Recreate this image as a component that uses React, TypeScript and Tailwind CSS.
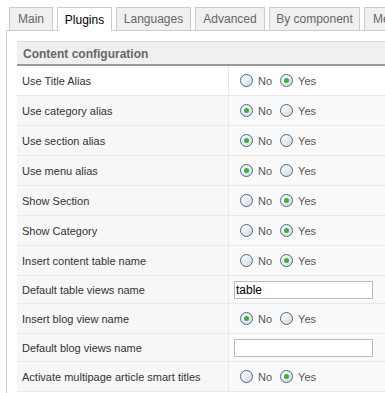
import React from "react";

type Row =
  | { label: string; kind: "radio"; yes: boolean }
  | { label: string; kind: "text"; value: string };

const rows: Row[] = [
  { label: "Use Title Alias", kind: "radio", yes: true },
  { label: "Use category alias", kind: "radio", yes: false },
  { label: "Use section alias", kind: "radio", yes: false },
  { label: "Use menu alias", kind: "radio", yes: false },
  { label: "Show Section", kind: "radio", yes: true },
  { label: "Show Category", kind: "radio", yes: true },
  { label: "Insert content table name", kind: "radio", yes: true },
  { label: "Default table views name", kind: "text", value: "table" },
  { label: "Insert blog view name", kind: "radio", yes: false },
  { label: "Default blog views name", kind: "text", value: "" },
  { label: "Activate multipage article smart titles", kind: "radio", yes: true },
];

const tabs = [
  { name: "Main", w: "w-[44px] justify-center" },
  { name: "Plugins", w: "w-[55px] justify-center" },
  { name: "Languages", w: "w-[75px] justify-center" },
  { name: "Advanced", w: "w-[70px] justify-center" },
  { name: "By component", w: "w-[91px] justify-center" },
  { name: "Menus", w: "w-[60px] justify-start pl-[8px]" },
];

function Radio({ checked }: { checked: boolean }) {
  return (
    <span className="relative inline-block w-[13px] h-[13px] rounded-full border border-[#3f6a94] bg-gradient-to-br from-white to-[#d4d8dc]">
      {checked && (
        <span className="absolute left-[3px] top-[3px] w-[5px] h-[5px] rounded-full bg-[#36b336]" />
      )}
    </span>
  );
}

function RadioPair({ yes }: { yes: boolean }) {
  return (
    <div className="flex items-center pl-[11px] text-[#555]">
      <Radio checked={!yes} />
      <span className="ml-[5px] mr-[8px] pt-[2px]">No</span>
      <Radio checked={yes} />
      <span className="ml-[5px] pt-[2px]">Yes</span>
    </div>
  );
}

export default function App() {
  return (
    <div className="w-[385px] h-[393px] overflow-hidden bg-white text-[#333] font-['Liberation_Sans',Arial,sans-serif]">
      <div className="w-[440px] pt-[7px]">
        {/* tabs */}
        <div className="flex gap-[4px] pl-[9px] text-[12px]">
          {tabs.map((t, i) =>
            i === 1 ? (
              <div
                key={t.name}
                className={`${t.w} h-[24px] -mb-px relative z-10 flex items-center border border-b-0 border-[#ccc] bg-white text-black`}
              >
                {t.name}
              </div>
            ) : (
              <div
                key={t.name}
                className={`${t.w} h-[23px] flex items-center border border-b-0 border-[#ccc] bg-[#f0f0f0] text-[#666]`}
              >
                {t.name}
              </div>
            )
          )}
        </div>

        {/* panel */}
        <div className="ml-[6px] border-l border-t border-[#ccc] pl-[10px] pt-[10px] h-[400px]">
          <div className="h-[25px] flex items-center pl-[6px] pt-[1px] bg-[#f0f0f0] border-t border-[#ddd] border-b-2 border-b-[#999] text-[12px] font-bold text-[#666]">
            Content configuration
          </div>
          <div className="text-[11px]">
            {rows.map((r, i) => (
              <div
                key={r.label}
                className={`flex border-b border-[#e9e9e9] ${r.kind === "radio" ? "h-[30px]" : "h-[28px]"}`}
              >
                <div
                  className={`w-[212px] flex items-center pl-[5px] pt-[2px] border-r border-[#e9e9e9] ${i === 0 ? "bg-white" : "bg-[#f7f7f7]"}`}
                >
                  {r.label}
                </div>
                <div className={`flex-1 flex items-center ${i === 0 ? "bg-white" : "bg-[#fafafa]"}`}>
                  {r.kind === "radio" ? (
                    <RadioPair yes={r.yes} />
                  ) : (
                    <div className="ml-[5px] w-[139px] h-[18px] border border-[#bbb] bg-white flex items-center pl-[1px] text-[12px] text-black">
                      {r.value}
                    </div>
                  )}
                </div>
              </div>
            ))}
          </div>
        </div>
      </div>
    </div>
  );
}
